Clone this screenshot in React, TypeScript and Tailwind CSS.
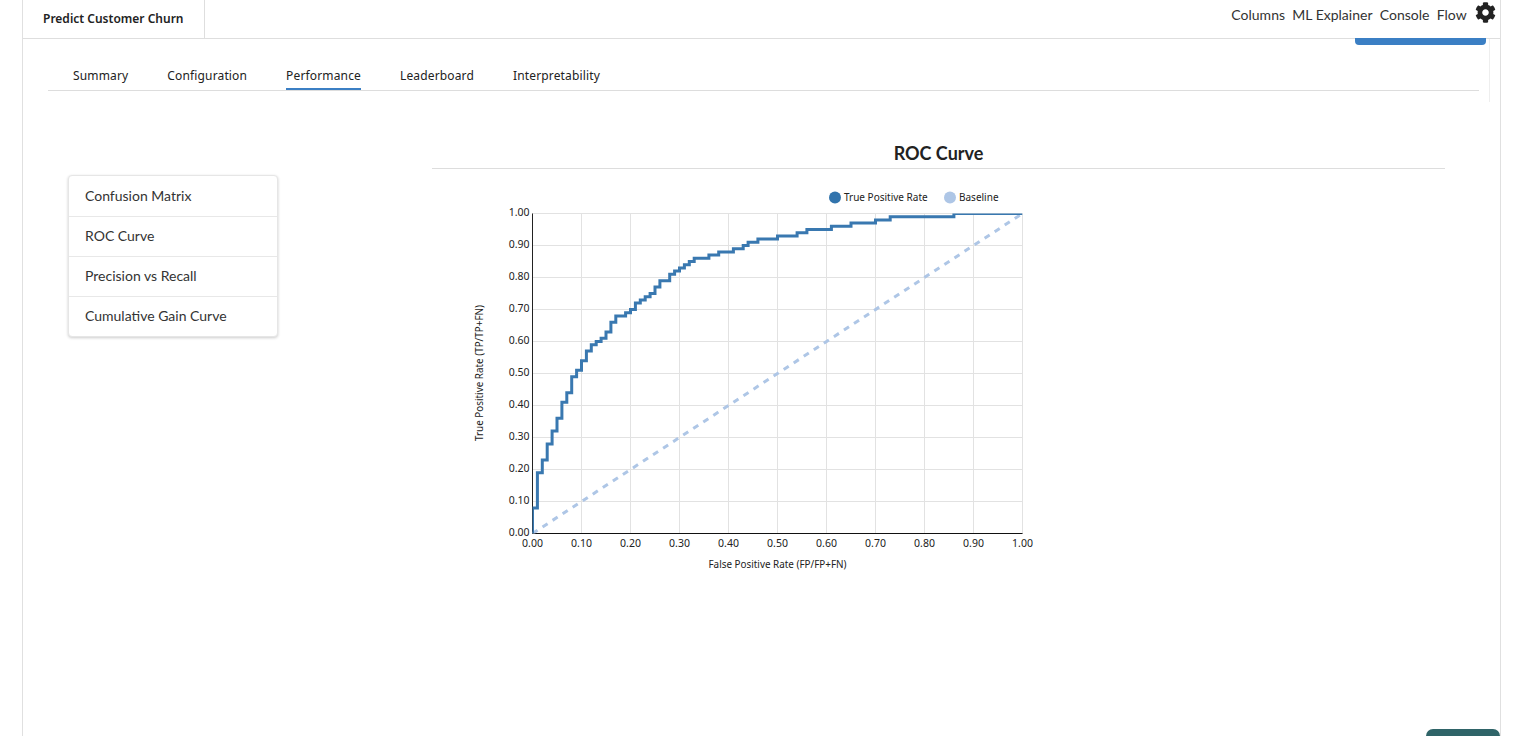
import React from "react";
import { FaCog } from "react-icons/fa";

const tabs = ["Summary", "Configuration", "Performance", "Leaderboard", "Interpretability"];
const menu = ["Confusion Matrix", "ROC Curve", "Precision vs Recall", "Cumulative Gain Curve"];
const links = ["Columns", "ML Explainer", "Console", "Flow"];
const ticks = [0, 0.1, 0.2, 0.3, 0.4, 0.5, 0.6, 0.7, 0.8, 0.9, 1];

// [false positive rate, true positive rate] at each step of the curve
const steps = [
   [0, 0.08], [0.01, 0.19], [0.02, 0.23], [0.03, 0.28], [0.04, 0.32], [0.05, 0.36], [0.06, 0.41], [0.07, 0.44],
   [0.08, 0.49], [0.09, 0.51], [0.1, 0.54], [0.11, 0.57], [0.12, 0.59], [0.13, 0.6], [0.14, 0.61], [0.15, 0.63],
   [0.16, 0.66], [0.17, 0.68], [0.19, 0.69], [0.2, 0.7], [0.21, 0.72], [0.22, 0.73], [0.23, 0.74], [0.24, 0.75],
   [0.25, 0.77], [0.26, 0.79], [0.28, 0.81], [0.29, 0.82], [0.3, 0.83], [0.31, 0.84], [0.32, 0.85], [0.33, 0.86],
   [0.36, 0.87], [0.38, 0.88], [0.41, 0.89], [0.43, 0.9], [0.44, 0.91], [0.46, 0.92], [0.5, 0.93], [0.54, 0.94],
   [0.56, 0.95], [0.61, 0.96], [0.65, 0.97], [0.7, 0.98], [0.73, 0.99], [0.86, 1],
];

const px = (v: number) => 68.5 + v * 490;
const py = (v: number) => 44.5 + (1 - v) * 320;

const curve = () => {
   let d = `M${px(0)} ${py(0)}`;
   steps.forEach(([x, y]) => {
      d += ` H${px(x)} V${py(y)}`;
   });
   return d + ` H${px(1)}`;
};

const RocChart = () => {
   return (
      <svg width="590" height="410" viewBox="0 0 590 410" className="block font-['Noto_Sans',sans-serif]">
         <defs>
            <clipPath id="plot">
               <rect x={px(0)} y={py(1)} width="490" height="320" />
            </clipPath>
         </defs>
         {ticks.map((t) => (
            <g key={t}>
               <line x1={px(0)} x2={px(1)} y1={py(t)} y2={py(t)} stroke="#e2e2e2" />
               <line x1={px(t)} x2={px(t)} y1={py(0)} y2={py(1)} stroke="#e2e2e2" />
               <text x={px(0) - 3} y={py(t) + 2} textAnchor="end" fontSize="10.5" fill="#222">
                  {t.toFixed(2)}
               </text>
               <text x={px(t)} y={py(0) + 13.5} textAnchor="middle" fontSize="10.5" fill="#222">
                  {t.toFixed(2)}
               </text>
            </g>
         ))}
         <line x1={px(0)} x2={px(0)} y1={py(0)} y2={py(1)} stroke="#222" />
         <line x1={px(0)} x2={px(1)} y1={py(0)} y2={py(0)} stroke="#111" />
         <g clipPath="url(#plot)">
            <line x1={px(0)} x2={px(1)} y1={py(0)} y2={py(1)} stroke="#aec6e6" strokeWidth="3" strokeDasharray="6 6" />
            <path d={curve()} fill="none" stroke="#3978b0" strokeWidth="3" />
         </g>
         <circle cx="371" cy="28.5" r="6" fill="#3274ad" />
         <text x="380" y="32" fontSize="10" fill="#222">True Positive Rate</text>
         <circle cx="486" cy="28.5" r="6" fill="#aec6e6" />
         <text x="495" y="32" fontSize="10" fill="#222">Baseline</text>
         <text x="313.5" y="399" textAnchor="middle" fontSize="9.9" fill="#222">False Positive Rate (FP/FP+FN)</text>
         <text transform="translate(19 204) rotate(-90)" textAnchor="middle" fontSize="9.9" fill="#222">
            True Positive Rate (TP/TP+FN)
         </text>
      </svg>
   );
};

const App = () => {
   return (
      <div className="h-[736px] w-[1516px] overflow-hidden bg-white font-['Lato',sans-serif] text-[#2b2b2b]">
         <div className="relative ml-[22px] h-full w-[1479px] border-x border-[#e0e0e0]">
            <header className="flex h-[39px] items-start justify-between border-b border-[#dedede]">
               <div className="flex h-[38px] w-[182px] items-center border-r border-[#dedede] pl-5 font-['Noto_Sans',sans-serif] text-xs font-semibold text-[#222]">
                  Predict Customer Churn
               </div>
               <nav className="mr-[4px] flex items-start gap-[7.3px] pt-[6px] text-sm leading-[17px] text-[#333]">
                  {links.map((l) => (
                     <span key={l}>{l}</span>
                  ))}
                  <FaCog className="-mt-[4px] ml-[1px] h-[21px] w-[21px] text-[#222]" />
               </nav>
            </header>

            <div className="absolute top-[38px] left-[1332px] h-[7px] w-[131px] rounded-b bg-[#3b7fc4]" />
            <div className="absolute top-[39px] left-[1466px] h-[63px] w-px bg-[#eeeeee]" />

            <div className="mx-[25px] mt-[20px] flex h-[32px] w-[1431px] items-stretch gap-[39px] border-b border-[#dddddd] pl-[25px] font-['Noto_Sans',sans-serif] text-xs tracking-[0.15px] text-[#222]">
               {tabs.map((t) => (
                  <div
                     key={t}
                     className={
                        t === "Performance"
                           ? "flex items-center border-b-2 border-[#3b7fc4] pt-[4px]"
                           : "flex items-center pt-[2px]"
                     }
                  >
                     {t}
                  </div>
               ))}
            </div>

            <div className="flex items-start">
               <aside className="mt-[84px] ml-[45px] w-[210px] rounded border border-[#e6e6e6] bg-white text-sm text-[#333] shadow-[0_1px_3px_rgba(0,0,0,0.2)]">
                  {menu.map((m, i) => (
                     <div
                        key={m}
                        className={
                           i === 0
                              ? "flex h-[41px] items-center border-b border-[#e8e8e8] pl-4"
                              : i < 3
                                ? "flex h-10 items-center border-b border-[#e8e8e8] pb-[2px] pl-4"
                                : "flex h-[39px] items-center pb-[2px] pl-4"
                        }
                     >
                        {m}
                     </div>
                  ))}
               </aside>
               <section className="mt-[49px] ml-[154px] w-[1013px]">
                  <h2 className="flex h-[29px] items-center justify-center border-b border-[#dddddd] pb-[3px] text-lg font-bold text-[#222]">
                     ROC Curve
                  </h2>
                  <div className="ml-[32px]">
                     <RocChart />
                  </div>
               </section>
            </div>

            <div className="absolute right-0 bottom-0 h-[7px] w-[74px] rounded-t-[14px] bg-[#2f6468]" />
         </div>
      </div>
   );
};

export default App;
